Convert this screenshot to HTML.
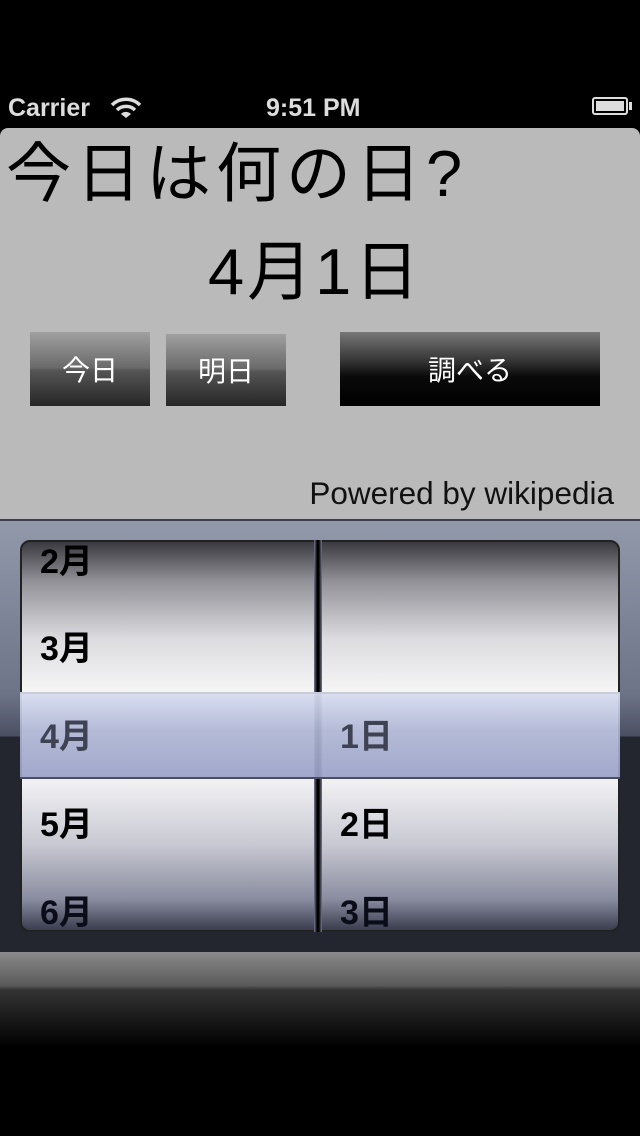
<!DOCTYPE html>
<html><head><meta charset="utf-8"><style>
*{margin:0;padding:0;box-sizing:border-box}
body{width:640px;height:1136px;background:#000;position:relative;overflow:hidden;font-family:"Liberation Sans","Noto Sans CJK JP",sans-serif}
.abs{position:absolute}
.sb{color:#ddd;font-weight:bold;font-size:25px;top:94px}
.panel{left:0;top:128px;width:640px;height:392px;background:#bababa;border-radius:8px 8px 0 0}
.btn{color:#fff;font-size:28px;display:flex;align-items:center;justify-content:center;background:linear-gradient(#a0a0a0,#6a6a6a 48%,#555 52%,#262626)}
.picker{left:0;top:521px;width:640px;height:431px;background:linear-gradient(#9299ab 0%,#6e7488 40%,#4a4f62 50%,#23252f 50%,#23252f 100%)}
.wheel{top:540px;height:392px;background:linear-gradient(#3a3a40 0%,#909096 10%,#dcdce0 25%,#f8f8f8 40%,#f0f0f3 50%,#f0f0f3 62%,#c8c8d2 78%,#8a8da0 92%,#3a3d4e 100%);border:2px solid #222}
.row{font-weight:bold;font-size:34px;color:#000;position:absolute}
</style></head><body>
<div class="abs sb" style="left:8px">Carrier</div>
<svg class="abs" style="left:110px;top:96px" width="32" height="24" viewBox="0 0 32 24"><path d="M2 9 A20 20 0 0 1 30 9" stroke="#ddd" stroke-width="3.5" fill="none"/><path d="M7 14 A13 13 0 0 1 25 14" stroke="#ddd" stroke-width="3.5" fill="none"/><path d="M16 22 L11 18 A7 7 0 0 1 21 18 Z" fill="#ddd"/></svg>
<div class="abs sb" style="left:266px">9:51 PM</div>
<div class="abs" style="left:592px;top:97px;width:36px;height:18px;border:2px solid #ddd;border-radius:3px;padding:2px"><div style="background:#ddd;width:100%;height:100%"></div></div>
<div class="abs" style="left:629px;top:102px;width:3px;height:8px;background:#ddd"></div>
<div class="abs panel"></div>
<div class="abs" style="left:6px;top:132px;font-size:65px;letter-spacing:5px;line-height:84px;color:#000">今日は何の日?</div>
<div class="abs" style="left:208px;top:232px;font-size:65px;letter-spacing:3px;line-height:80px;color:#000">4月1日</div>
<div class="abs btn" style="left:30px;top:332px;width:120px;height:74px">今日</div>
<div class="abs btn" style="left:166px;top:334px;width:120px;height:72px">明日</div>
<div class="abs btn" style="left:340px;top:332px;width:260px;height:74px;background:linear-gradient(#777,#333 40%,#0a0a0a 60%,#000)">調べる</div>
<div class="abs" style="right:26px;top:475px;font-size:31.5px;color:#111">Powered by wikipedia</div>
<div class="abs" style="left:0;top:519px;width:640px;height:3px;background:#3a3f4e"></div>
<div class="abs picker"></div>
<div class="abs wheel" style="left:20px;width:298px;border-radius:10px 0 0 10px"></div>
<div class="abs wheel" style="left:320px;width:300px;border-radius:0 10px 10px 0"></div>
<div class="abs" style="left:314px;top:540px;width:8px;height:392px;background:linear-gradient(90deg,#777a90,#000 40%,#000 60%,#777a90)"></div>
<div class="abs row" style="left:40px;top:534px">2月</div>
<div class="abs row" style="left:40px;top:621px">3月</div>
<div class="abs row" style="left:40px;top:797px">5月</div>
<div class="abs row" style="left:340px;top:797px">2日</div>
<div class="abs row" style="left:40px;top:885px;color:#0a0c18">6月</div>
<div class="abs row" style="left:340px;top:885px;color:#0a0c18">3日</div>
<div class="abs" style="left:20px;top:692px;width:600px;height:87px;background:linear-gradient(rgba(215,220,240,.95),rgba(175,182,212,.92) 45%,rgba(155,162,200,.92));border-top:2px solid #c8ccd8;border-bottom:2px solid #4a4e60"></div>
<div class="abs row" style="left:40px;top:709px;color:#3e4252">4月</div>
<div class="abs row" style="left:340px;top:709px;color:#3e4252">1日</div>
<div class="abs" style="left:0;top:952px;width:640px;height:95px;background:linear-gradient(#8a8a8a,#5a5a5a 35%,#333 40%,#000)"></div>
</body></html>
